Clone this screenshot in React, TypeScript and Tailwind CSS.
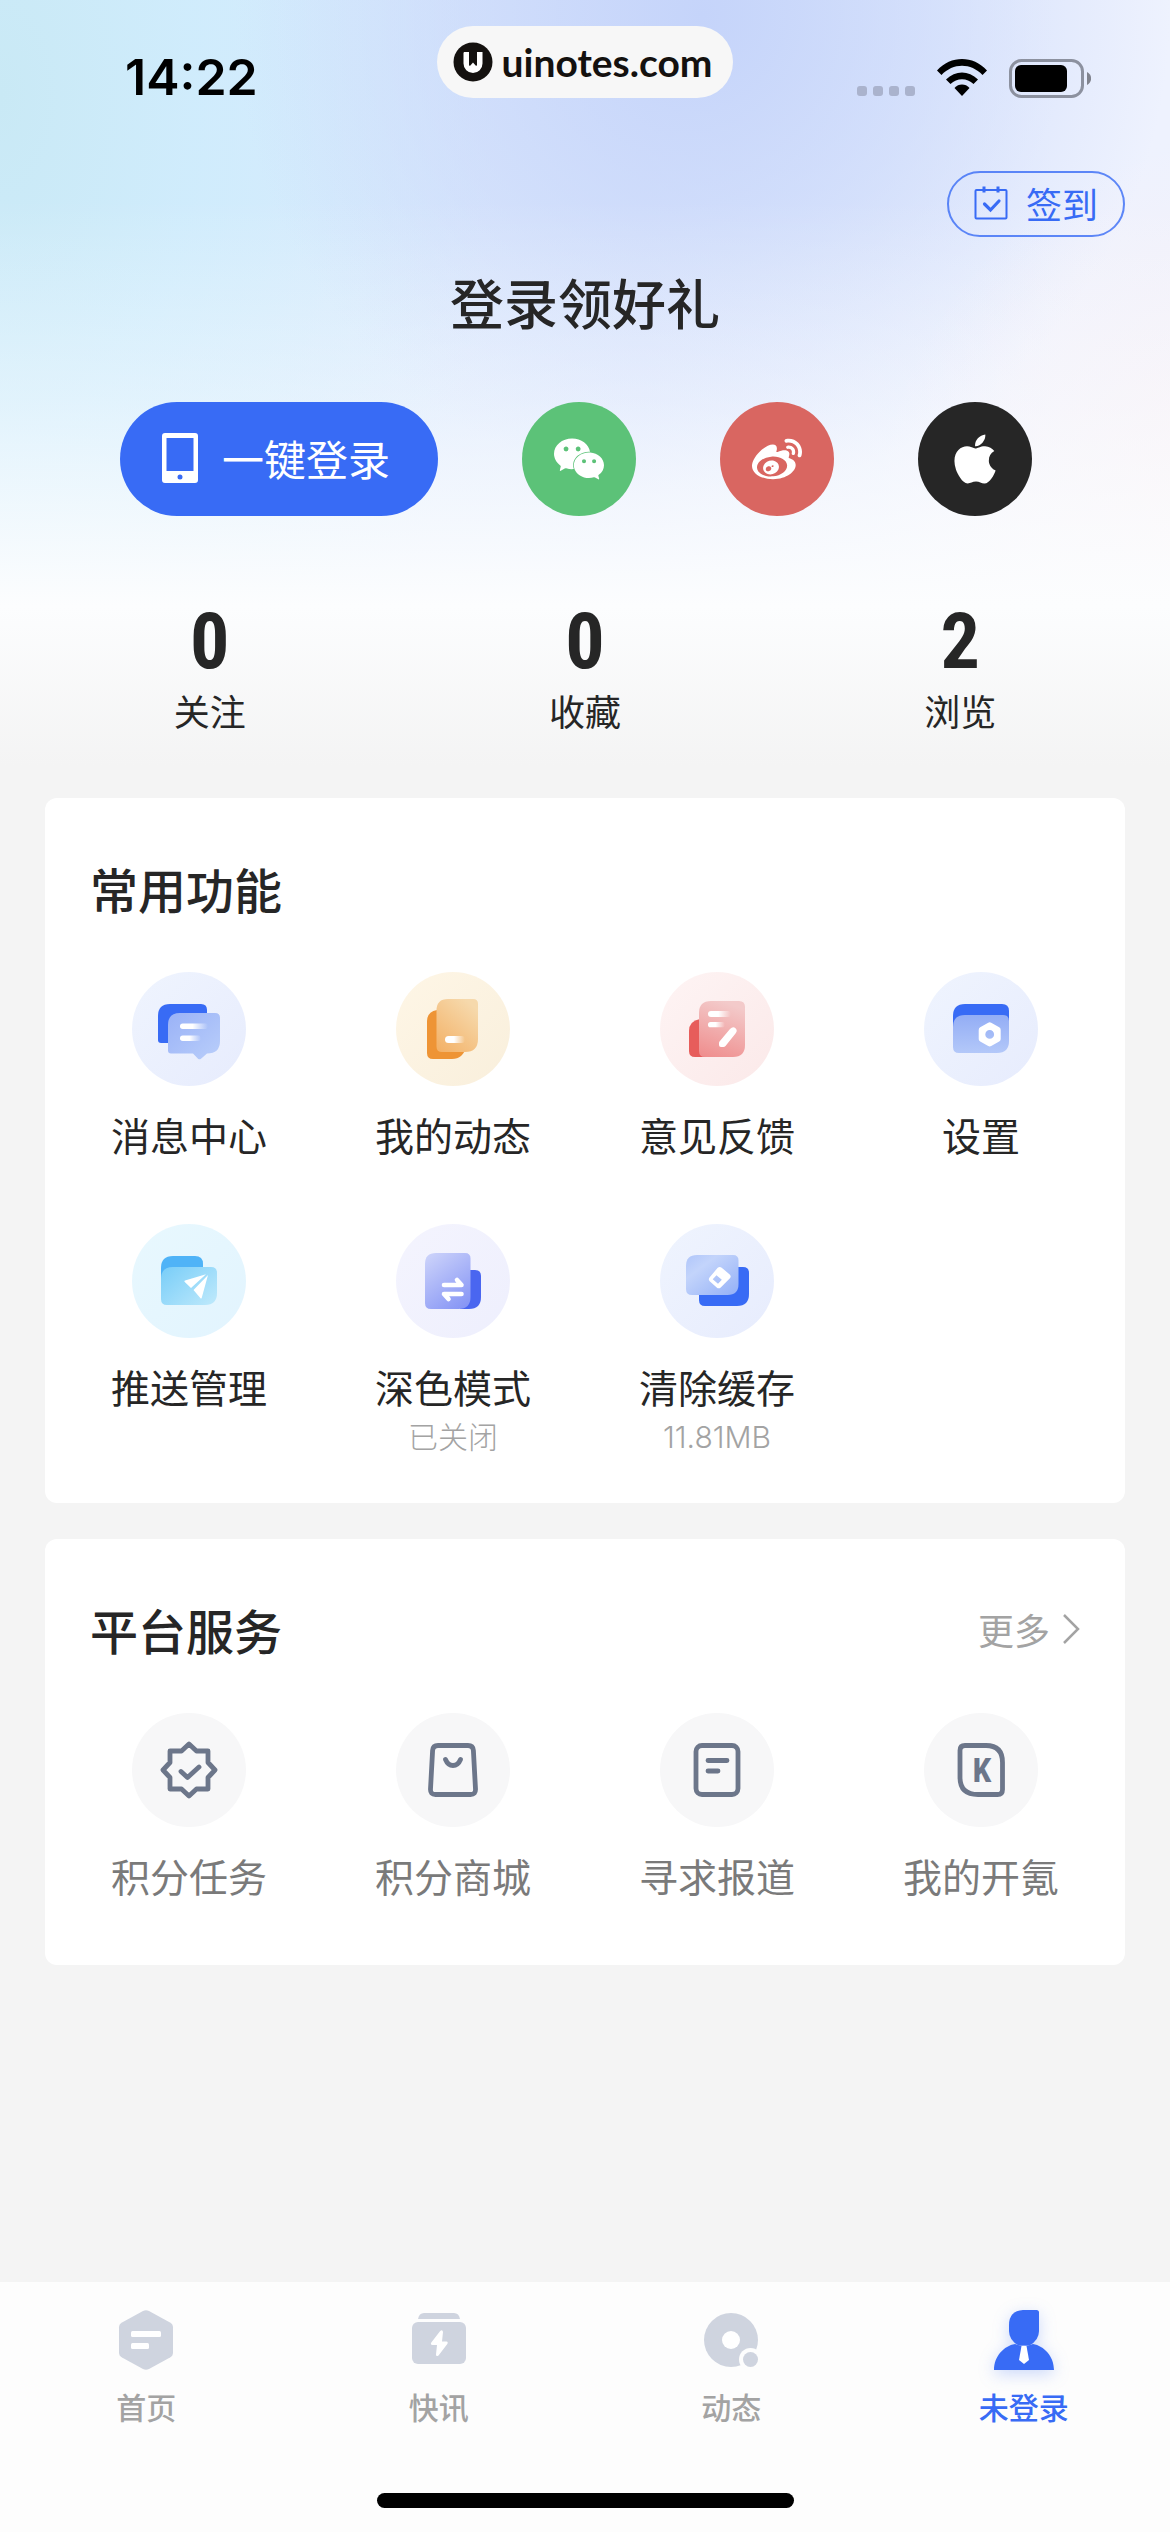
import type { ReactNode } from "react";
import { FaApple } from "react-icons/fa6";
import { SiSinaweibo, SiWechat } from "react-icons/si";

const StatusBar = () => (
  <div className="grid grid-cols-[1fr_auto_1fr] pt-[26px]">
    <div className="pl-[125px] pt-[30px] font-['Inter'] text-[50px] leading-[42px] font-semibold text-black">
      14:22
    </div>
    <div className="flex h-[72px] items-center gap-2 rounded-full bg-[#f7f7f7] pl-4 pr-5">
      <svg className="size-10" viewBox="0 0 40 40">
        <circle cx="20" cy="20" r="19.5" fill="#14110f" />
        <path
          d="M11 10h5v13c0 1 .8 1 1.400.4L20 20.500l2.600 2.900c.6.6 1.400.6 1.400-.4V10h5.500v11.500a9.500 9.500 0 0 1-19 0V11z"
          fill="#fff"
        />
      </svg>
      <span className="font-['Lato'] text-[39px] leading-[48px] font-bold text-[#14110f]">
        uinotes.com
      </span>
    </div>
    <div className="flex items-center justify-end gap-[22px] pt-8 pr-[79px]">
      <svg className="h-[38px] w-[58px]" viewBox="0 0 58 38">
        {[0, 16, 32, 48].map((x) => (
          <rect key={x} x={x} y="27" width="10" height="10" rx="3" fill="#aab3cd" />
        ))}
      </svg>
      <svg className="h-[38px] w-[50px]" viewBox="0 0 50 38">
        <path d="M0 11.500C14-3.800 36-3.800 50 11.500l-4.500 4.500C34 3.600 16 3.600 4.500 16z" />
        <path d="M9 20.500c9.500-9.300 22.500-9.300 32 0L36.500 25c-6.500-6.400-16.500-6.400-23 0z" />
        <path d="M17.500 29c4-4.600 11-4.600 15 0L25 37z" />
      </svg>
      <svg className="h-[39px] w-[82px]" viewBox="0 0 82 39">
        <rect x="1.500" y="1.500" width="72" height="36" rx="11" fill="none" stroke="#8c919f" strokeWidth="3" />
        <rect x="6" y="6" width="52" height="27" rx="6" />
        <path d="M78 13c5.500 2.500 5.500 10.500 0 13z" fill="#80838d" />
      </svg>
    </div>
  </div>
);

const MessageIcon = () => (
  <svg className="size-[114px]" viewBox="0 0 114 114">
    <defs>
      <linearGradient id="msg-bg" x1="0" y1="0" x2="1" y2="1">
        <stop stopColor="#eff4fe" />
        <stop offset="1" stopColor="#e7ecfd" />
      </linearGradient>
      <linearGradient id="msg-front" x1="0" y1="0" x2="1" y2="1">
        <stop stopColor="#9ab2f7" />
        <stop offset="1" stopColor="#b9cefa" />
      </linearGradient>
      <linearGradient id="fade">
        <stop offset=".45" stopColor="#fff" />
        <stop offset="1" stopColor="#fff" stopOpacity="0" />
      </linearGradient>
    </defs>
    <circle cx="57" cy="57" r="57" fill="url(#msg-bg)" />
    <path d="M38 32h31q6 0 6 6v33H29q-3 0-3-3V44q0-12 12-12" fill="#386bf5" />
    <path
      d="M48 41h35q5 0 5 5v23q0 12.500-13 12.500l-6 5.200q-1.500 1.200-3 0L61 81.500H39q-3 0-3-3V53q0-12 12-12"
      fill="url(#msg-front)"
    />
    <rect x="48" y="51.500" width="28" height="5.500" rx="2.700" fill="url(#fade)" />
    <rect x="48" y="63.500" width="21" height="5.500" rx="2.700" fill="url(#fade)" />
  </svg>
);

const FeedIcon = () => (
  <svg className="size-[114px]" viewBox="0 0 114 114">
    <defs>
      <linearGradient id="feed-bg" x1="0" y1="0" x2="1" y2="1">
        <stop stopColor="#fef6e6" />
        <stop offset="1" stopColor="#f9efdc" />
      </linearGradient>
      <linearGradient id="feed-front" x1="0" y1="1" x2=".7" y2="0">
        <stop stopColor="#f3b065" />
        <stop offset="1" stopColor="#f6d9ac" />
      </linearGradient>
    </defs>
    <circle cx="57" cy="57" r="57" fill="url(#feed-bg)" />
    <path d="M41 38h29v37q-3 12-14 12H37q-6 0-6-6V49q0-9 10-11" fill="#ee9435" />
    <path d="M52 27h25q5 0 5 5v35q0 13-13 13H46q-5.500 0-5.500-5.500V38.500Q40.500 27 52 27" fill="url(#feed-front)" />
    <rect x="49" y="64" width="20" height="7" rx="3.500" fill="url(#fade)" />
  </svg>
);

const FeedbackIcon = () => (
  <svg className="size-[114px]" viewBox="0 0 114 114">
    <defs>
      <linearGradient id="fb-bg" x1="0" y1="0" x2="1" y2="1">
        <stop stopColor="#fef4f4" />
        <stop offset="1" stopColor="#fbe9e9" />
      </linearGradient>
      <linearGradient id="fb-front" x1=".2" y1="1" x2=".5" y2="0">
        <stop stopColor="#ef8f8f" />
        <stop offset="1" stopColor="#f3caca" />
      </linearGradient>
    </defs>
    <circle cx="57" cy="57" r="57" fill="url(#fb-bg)" />
    <path d="M40 47h10v38H35q-6 0-6-6V59q0-10 11-12" fill="#e75d5b" />
    <path d="M51 29h28q6 0 6 6v38q0 12-12 12H45q-6 0-6-6V41q0-12 12-12" fill="url(#fb-front)" />
    <rect x="48" y="39" width="23" height="6" rx="3" fill="url(#fade)" />
    <rect x="48" y="50" width="17" height="5.300" rx="2.600" fill="url(#fade)" />
    <path d="M59.500 69.500 70 57q3-3 5.500-.8t0 5.300L65.500 74q-1 1-2 1H61q-2 0-2-2v-2q0-1 .5-1.500" fill="#fff" />
  </svg>
);

const SettingsIcon = () => (
  <svg className="size-[114px]" viewBox="0 0 114 114">
    <defs>
      <linearGradient id="set-front" x1="0" y1="0" x2="0" y2="1">
        <stop stopColor="#93adf5" />
        <stop offset="1" stopColor="#b3c8f9" />
      </linearGradient>
    </defs>
    <circle cx="57" cy="57" r="57" fill="url(#msg-bg)" />
    <path d="M41 32h37q7 0 7 7v16H29V44q0-12 12-12" fill="#386bf5" />
    <path d="M41 43h38q6 0 6 6v20q0 12-12 12H35q-6 0-6-6V55q0-12 12-12" fill="url(#set-front)" />
    <path
      fillRule="evenodd"
      d="M64.200 50.800q1.500-.9 3 0l8 4.500q1.500.9 1.500 2.600v9q0 1.700-1.500 2.600l-8 4.500q-1.500.9-3 0l-8-4.500q-1.500-.9-1.500-2.600v-9q0-1.700 1.500-2.600zM65.700 58a4.400 4.400 0 1 0 0 8.800 4.400 4.400 0 0 0 0-8.800"
      fill="#fff"
    />
  </svg>
);

const PushIcon = () => (
  <svg className="size-[114px]" viewBox="0 0 114 114">
    <defs>
      <linearGradient id="push-bg" x1="0" y1="0" x2="1" y2="1">
        <stop stopColor="#e8f8fe" />
        <stop offset="1" stopColor="#e2f4fe" />
      </linearGradient>
      <linearGradient id="push-front" x1="0" y1="0" x2="1" y2=".8">
        <stop stopColor="#78cdf8" />
        <stop offset="1" stopColor="#b9e7fb" />
      </linearGradient>
    </defs>
    <circle cx="57" cy="57" r="57" fill="url(#push-bg)" />
    <path d="M41 32h22q8 0 8 8v15H29V44q0-12 12-12" fill="#4fb3f7" />
    <path d="M41 43h38q6 0 6 6v20q0 12-12 12H35q-6 0-6-6V55q0-12 12-12" fill="url(#push-front)" />
    <path d="M53 56.500 74 50.300 59 64l-6.500-6.200q-.5-.9.500-1.300M76 51l-6.300 23q-.7 1-1.400 0L61.500 66z" fill="#fff" />
  </svg>
);

const DarkModeIcon = () => (
  <svg className="size-[114px]" viewBox="0 0 114 114">
    <defs>
      <linearGradient id="dark-bg" x1="0" y1="0" x2="1" y2="1">
        <stop stopColor="#f4f4fe" />
        <stop offset="1" stopColor="#eeeffd" />
      </linearGradient>
      <linearGradient id="dark-front" x1=".2" y1="0" x2=".8" y2="1">
        <stop stopColor="#c9d0fa" />
        <stop offset="1" stopColor="#8796f5" />
      </linearGradient>
    </defs>
    <circle cx="57" cy="57" r="57" fill="url(#dark-bg)" />
    <path d="M66 46h13q6 0 6 6v21q0 12-12 12h-9z" fill="#4a66f0" />
    <path d="M40 29h29q5.500 0 5.500 5.500V73q0 12-12 12H35q-6 0-6-6V40q0-11 11-11" fill="url(#dark-front)" />
    <path d="M48 61h17.500L61 56M65.500 70H48l4.500 5" fill="none" stroke="#fff" strokeWidth="4.600" strokeLinecap="round" strokeLinejoin="round" />
  </svg>
);

const CacheIcon = () => (
  <svg className="size-[114px]" viewBox="0 0 114 114">
    <defs>
      <linearGradient id="cache-front" x1="0" y1="0" x2="1" y2="1">
        <stop stopColor="#b0c6fa" />
        <stop offset=".3" stopColor="#c3d4fb" />
        <stop offset="1" stopColor="#93b0f7" />
      </linearGradient>
    </defs>
    <circle cx="57" cy="57" r="57" fill="url(#msg-bg)" />
    <path d="M50 43h33q6 0 6 6v21q0 12-12 12H45q-6 0-6-6V54z" fill="#386bf5" />
    <path d="M37 31h36q5.500 0 5.500 5.500V60q0 11-11 11H32q-6 0-6-6V42q0-11 11-11" fill="url(#cache-front)" />
    <path
      fillRule="evenodd"
      d="M57.700 43.800q2-1.600 4 0l8 6.600q2 2 0 4l-9 9q-2 1.800-4 0l-7-6.200q-1.800-2 0-4zM56.500 51.300l-3.800 4 5.300 4.500 3.800-4z"
      fill="#fff"
    />
  </svg>
);

// outline icons of the service card share one stroke
const ServiceIcon = ({ children }: { children: ReactNode }) => (
  <svg
    className="size-[114px]"
    viewBox="0 0 114 114"
    fill="none"
    stroke="#6c768a"
    strokeWidth="4.800"
    strokeLinecap="round"
    strokeLinejoin="round"
  >
    <circle cx="57" cy="57" r="57" fill="#f7f7f8" stroke="none" />
    {children}
  </svg>
);

const tools = [
  { label: "消息中心", icon: <MessageIcon /> },
  { label: "我的动态", icon: <FeedIcon /> },
  { label: "意见反馈", icon: <FeedbackIcon /> },
  { label: "设置", icon: <SettingsIcon /> },
  { label: "推送管理", icon: <PushIcon /> },
  { label: "深色模式", icon: <DarkModeIcon />, note: "已关闭" },
  { label: "清除缓存", icon: <CacheIcon />, note: "11.81MB" },
];

const services = [
  {
    label: "积分任务",
    icon: (
      <ServiceIcon>
        <path d="M57 31l7.500 7H76v11.500l7 7.500-7 7.500V76H64.500L57 83l-7.500-7H38V64.500L31 57l7-7.500V38h11.500z" />
        <path d="M49 58.500l6.500 6L67 54" />
      </ServiceIcon>
    ),
  },
  {
    label: "积分商城",
    icon: (
      <ServiceIcon>
        <path d="M42 32.500h30q5 0 5.400 5L79.500 76q.3 5.500-5 5.500h-35q-5.300 0-5-5.500l2.100-38.500q.4-5 5.400-5" />
        <path d="M49.500 46.500q2.500 6 7.500 6t7.500-6" />
      </ServiceIcon>
    ),
  },
  {
    label: "寻求报道",
    icon: (
      <ServiceIcon>
        <rect x="36" y="32.500" width="42" height="49" rx="6" />
        <path d="M48 47.500h19M48 58h10" />
      </ServiceIcon>
    ),
  },
  {
    label: "我的开氪",
    icon: (
      <ServiceIcon>
        <path d="M41 32.500h21q16.500 0 16.500 17V76.500q0 5-5 5H54q-18 0-18-17v-27q0-5 5-5" />
        <text
          x="58"
          y="69"
          textAnchor="middle"
          fill="#6c768a"
          stroke="none"
          className="font-['Liberation_Sans_Narrow','Roboto_Condensed','Roboto'] text-[34px] font-bold"
        >
          K
        </text>
      </ServiceIcon>
    ),
  },
];

const stats = [
  { value: 0, label: "关注" },
  { value: 0, label: "收藏" },
  { value: 2, label: "浏览" },
];

const tabs = [
  {
    label: "首页",
    active: false,
    icon: (
      <svg className="size-[60px]" viewBox="0 0 60 60">
        <path d="M27 1q3-1.500 6 0l21 11.500q3 1.700 3 5v25q0 3.300-3 5L33 59q-3 1.500-6 0L6 47.500q-3-1.700-3-5v-25q0-3.300 3-5z" fill="#cfd4df" />
        <rect x="15" y="21" width="30" height="6" rx="1.500" fill="#fff" />
        <rect x="15" y="33" width="18" height="6" rx="1.500" fill="#fff" />
      </svg>
    ),
  },
  {
    label: "快讯",
    active: false,
    icon: (
      <svg className="size-[60px]" viewBox="0 0 60 60">
        <path d="M9 9q1-6 6-6h30q5 0 6 6z" fill="#cfd4df" />
        <rect x="3" y="12" width="54" height="42" rx="6" fill="#cfd4df" />
        <path d="M31 21.200q2.500-2 3 .8l-1 9.500h4.500q2 .5.800 2.500L29.500 45.500q-2.500 1.500-2.500-1l1-9.500h-4.500q-2.500-.5-1.200-2.500z" fill="#fff" />
      </svg>
    ),
  },
  {
    label: "动态",
    active: false,
    icon: (
      <svg className="size-[60px]" viewBox="0 0 60 60">
        <circle cx="30" cy="30" r="27" fill="#cfd4df" />
        <circle cx="30" cy="30" r="9" fill="#fff" />
        <circle cx="49.500" cy="49.500" r="11.500" fill="#fdfdfd" />
        <circle cx="49.500" cy="49.500" r="7.500" fill="#cfd4df" />
      </svg>
    ),
  },
  {
    label: "未登录",
    active: true,
    icon: (
      <svg className="size-[60px] drop-shadow-[0_4px_8px_rgba(56,107,245,0.25)]" viewBox="0 0 60 60">
        <path d="M29 0h13.500Q45 0 45 2.500V21q0 9-9.500 14.500h-11Q15 30 15 21v-6Q15 1 29 0" fill="#386bf5" />
        <path d="M0 60c0-14 10-24 21-26q9 4 18 0c11 2 21 12 21 26z" fill="#386bf5" />
        <path d="M27.500 36h5L35 50l-5 4-5-4z" fill="#fff" />
      </svg>
    ),
  },
];

const App = () => {
  return (
    <div className="flex min-h-screen flex-col bg-[#f4f4f4] font-['Noto_Sans_CJK_SC',sans-serif] text-[#262626]">
      <header className="bg-[linear-gradient(180deg,rgba(252,253,254,0)_25%,rgba(252,253,254,0.4)_50%,#fcfdfe_76%,#f4f4f4_96%),radial-gradient(circle_at_110%_68%,#fbeff2_0%,rgba(251,239,242,0)_30%),radial-gradient(ellipse_40%_60%_at_60%_2%,#c5d4fa_0%,rgba(200,215,250,0.6)_50%,rgba(210,224,252,0)_100%),radial-gradient(ellipse_42%_110%_at_0%_12%,#c9e9f5_0%,rgba(206,236,252,0.85)_40%,rgba(214,234,254,0)_100%),linear-gradient(90deg,#d8edfd,#dde7fd_55%,#eef2fe_90%)] pb-[61px]">
        <StatusBar />
        <div className="flex justify-end pt-[73px] pr-[45px]">
          <button className="flex h-[66px] items-center gap-[18px] rounded-full border-2 border-[#386bf5]/80 px-[25px] pb-[3px] text-[36px] leading-[48px] text-[#386bf5]">
            <svg className="size-[34px]" viewBox="0 0 34 34" fill="none" stroke="#386bf5">
              <rect x="1.500" y="4" width="31" height="28.500" rx="1" strokeWidth="2" />
              <path d="M10 .5v6M24 .5v6" strokeWidth="3" />
              <path d="M10.500 18l6 6 8.500-9" strokeWidth="3.200" strokeLinecap="round" />
            </svg>
            签到
          </button>
        </div>
        <h1 className="pt-[27px] text-center text-[54px] leading-[76px] font-medium">登录领好礼</h1>
        <div className="flex justify-center gap-[84px] pt-[62px] pr-[18px]">
          <button className="flex h-[114px] items-center gap-6 rounded-full bg-[#386bf5] pb-[2px] pl-[42px] pr-12 text-[42px] leading-[60px] text-white">
            <svg className="h-[50px] w-9" viewBox="0 0 36 50">
              <path fillRule="evenodd" d="M3 0h30q3 0 3 3v44q0 3-3 3H3q-3 0-3-3V3q0-3 3-3m1.500 5v33h27V5zM18 41.500a2.500 2.500 0 1 0 0 5 2.500 2.500 0 0 0 0-5" fill="#fff" />
            </svg>
            一键登录
          </button>
          <button aria-label="微信登录" className="flex size-[114px] items-center justify-center rounded-full bg-[#5cc278] text-white">
            <SiWechat size={50} />
          </button>
          <button aria-label="微博登录" className="flex size-[114px] items-center justify-center rounded-full bg-[#d96661] text-white">
            <SiSinaweibo size={50} />
          </button>
          <button aria-label="Apple 登录" className="flex size-[114px] items-center justify-center rounded-full bg-[#262626] text-white">
            <FaApple size={56} />
          </button>
        </div>
        <div className="grid grid-cols-3 px-[22px] pt-[85px]">
          {stats.map((item) => (
            <div key={item.label} className="flex flex-col items-center">
              <span className="font-['Liberation_Sans_Narrow','Roboto_Condensed','Roboto'] text-[78px] leading-[82px] font-bold">
                {item.value}
              </span>
              <span className="text-[36px] leading-[54px]">{item.label}</span>
            </div>
          ))}
        </div>
      </header>

      <main className="flex flex-col gap-9 px-[45px] pb-10">
        <section className="rounded-xl bg-white px-3 pt-[60px] pb-[45px]">
          <h2 className="pl-[33px] text-[48px] leading-[60px] font-medium">常用功能</h2>
          <div className="grid grid-cols-4 gap-y-[60px] pt-[54px]">
            {tools.map((item) => (
              <button key={item.label} className="flex flex-col items-center">
                {item.icon}
                <span className="pt-[18px] text-[39px] leading-[60px]">{item.label}</span>
                {item.note && (
                  <span className="font-['Inter','Noto_Sans_CJK_SC',sans-serif] text-[30px] leading-[42px] font-light text-[#a3a3a3]">
                    {item.note}
                  </span>
                )}
              </button>
            ))}
          </div>
        </section>

        <section className="rounded-xl bg-white px-3 pt-[60px] pb-[60px]">
          <div className="flex items-center justify-between pr-[33px] pl-[33px]">
            <h2 className="text-[48px] leading-[60px] font-medium">平台服务</h2>
            <a href="#more" className="flex items-center gap-3 text-[36px] leading-[60px] text-[#a3a3a3]">
              更多
              <svg className="h-[30px] w-[18px]" viewBox="0 0 18 30" fill="none" stroke="#a3a3a3" strokeWidth="2.500">
                <path d="M2 1l14 14L2 29" />
              </svg>
            </a>
          </div>
          <div className="grid grid-cols-4 pt-[54px]">
            {services.map((item) => (
              <button key={item.label} className="flex flex-col items-center text-[#7a7a7a]">
                {item.icon}
                <span className="pt-[18px] text-[39px] leading-[60px]">{item.label}</span>
              </button>
            ))}
          </div>
        </section>
      </main>

      <footer className="mt-auto bg-[#fdfdfd] pt-7 pb-6">
        <nav className="grid grid-cols-4">
          {tabs.map((tab) => (
            <a key={tab.label} href={`#${tab.label}`} className="flex flex-col items-center">
              {tab.icon}
              <span
                className={`pt-[15px] text-[30px] leading-[42px] font-medium ${tab.active ? "text-[#386bf5]" : "text-[#a3a3a3]"}`}
              >
                {tab.label}
              </span>
            </a>
          ))}
        </nav>
        <div className="mx-auto mt-[66px] h-[15px] w-[417px] rounded-full bg-black"></div>
      </footer>
    </div>
  );
};

export default App;
